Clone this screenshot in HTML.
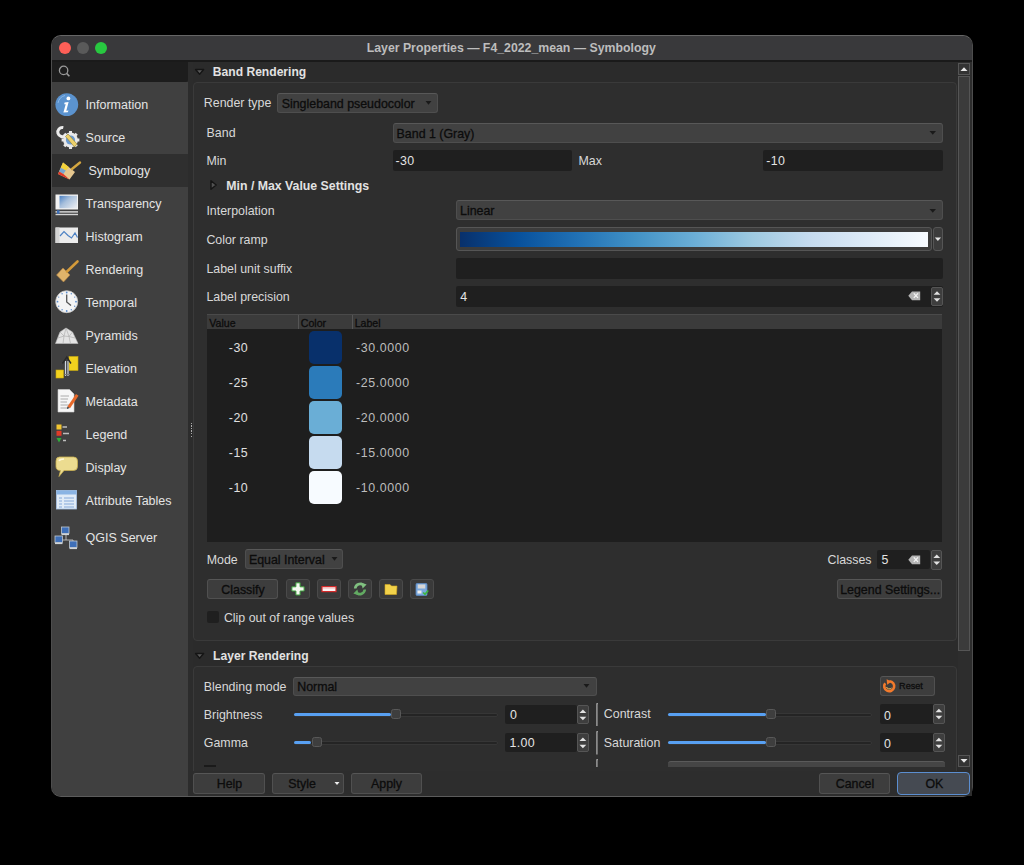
<!DOCTYPE html><html><head><meta charset="utf-8"><style>
html,body{margin:0;padding:0}
body{background:#000;width:1024px;height:865px;overflow:hidden;position:relative;font-family:"Liberation Sans",sans-serif}
.a{position:absolute;box-sizing:border-box}
.t{position:absolute;line-height:16px;white-space:nowrap}
svg{position:absolute;overflow:visible}
.combo{position:absolute;box-sizing:border-box;background:#414141;border:1px solid #4e4e4e;border-top-color:#585858;border-radius:3px}
.field{position:absolute;box-sizing:border-box;background:#1f1f1f;border-radius:2px}
.btn{position:absolute;box-sizing:border-box;background:#3d3d3d;border:1px solid #505050;border-top-color:#565656;border-radius:3px}
.tb{position:absolute;box-sizing:border-box;background:#3a3a3a;border:1px solid #4a4a4a;border-radius:3px}
</style></head><body>
<div class="a" style="left:51px;top:35px;width:922px;height:762px;background:#2d2d2d;border-radius:10px;border:1px solid #4d4d4d;border-bottom-color:#5c5c5c;border-top-color:#666666;overflow:hidden"></div>
<div class="a" style="left:52px;top:36px;width:920px;height:24px;background:#39393b;border-radius:9px 9px 0 0"></div>
<div class="a" style="left:52px;top:60px;width:920px;height:1.8px;background:#1a1a1a"></div>
<div class="a" style="left:58.5px;top:41.5px;width:12px;height:12px;border-radius:50%;background:#fe5f57"></div>
<div class="a" style="left:76.5px;top:41.5px;width:12px;height:12px;border-radius:50%;background:#5a5a5a"></div>
<div class="a" style="left:94.5px;top:41.5px;width:12px;height:12px;border-radius:50%;background:#28c840"></div>
<div class="t" style="left:366.70px;top:39.74px;font-size:12.3px;color:#bdbdbd;font-weight:700;">Layer Properties — F4_2022_mean — Symbology</div>
<div class="a" style="left:52px;top:61.8px;width:136px;height:20px;background:#1d1d1d;border-bottom-right-radius:2px"></div>
<svg style="left:58px;top:65px" width="14" height="14"><circle cx="5.6" cy="5.4" r="4.2" fill="none" stroke="#9a9a9a" stroke-width="1.3"/><line x1="8.6" y1="8.4" x2="11.4" y2="11.2" stroke="#9a9a9a" stroke-width="1.6"/></svg>
<div class="a" style="left:52px;top:82px;width:136px;height:714px;background:#404040;border-bottom-left-radius:9px"></div>
<div class="a" style="left:52px;top:154px;width:136px;height:33px;background:#2f2f2f"></div>
<div class="a" style="left:188px;top:61.8px;width:5px;height:734px;background:#2c2c2c"></div>
<div class="a" style="left:190.5px;top:422.5px;width:1.5px;height:1.5px;background:#aaa"></div>
<div class="a" style="left:190.5px;top:425.1px;width:1.5px;height:1.5px;background:#aaa"></div>
<div class="a" style="left:190.5px;top:427.7px;width:1.5px;height:1.5px;background:#aaa"></div>
<div class="a" style="left:190.5px;top:430.3px;width:1.5px;height:1.5px;background:#aaa"></div>
<div class="a" style="left:190.5px;top:432.9px;width:1.5px;height:1.5px;background:#aaa"></div>
<div class="a" style="left:190.5px;top:435.5px;width:1.5px;height:1.5px;background:#aaa"></div>
<div class="t" style="left:85.60px;top:97.37px;font-size:12.5px;color:#e4e4e4;">Information</div>
<div class="t" style="left:85.60px;top:130.27px;font-size:12.5px;color:#e4e4e4;">Source</div>
<div class="t" style="left:88.40px;top:162.97px;font-size:12.5px;color:#e4e4e4;">Symbology</div>
<div class="t" style="left:85.60px;top:195.77px;font-size:12.5px;color:#e4e4e4;">Transparency</div>
<div class="t" style="left:85.60px;top:228.87px;font-size:12.5px;color:#e4e4e4;">Histogram</div>
<div class="t" style="left:85.60px;top:262.07px;font-size:12.5px;color:#e4e4e4;">Rendering</div>
<div class="t" style="left:85.60px;top:294.67px;font-size:12.5px;color:#e4e4e4;">Temporal</div>
<div class="t" style="left:85.60px;top:327.87px;font-size:12.5px;color:#e4e4e4;">Pyramids</div>
<div class="t" style="left:85.60px;top:360.97px;font-size:12.5px;color:#e4e4e4;">Elevation</div>
<div class="t" style="left:85.60px;top:393.97px;font-size:12.5px;color:#e4e4e4;">Metadata</div>
<div class="t" style="left:85.60px;top:426.87px;font-size:12.5px;color:#e4e4e4;">Legend</div>
<div class="t" style="left:85.60px;top:460.07px;font-size:12.5px;color:#e4e4e4;">Display</div>
<div class="t" style="left:85.60px;top:493.07px;font-size:12.5px;color:#e4e4e4;">Attribute Tables</div>
<div class="t" style="left:85.60px;top:530.07px;font-size:12.5px;color:#e4e4e4;">QGIS Server</div>
<svg style="left:55px;top:93px" width="24" height="24" viewBox="0 0 24 24"><circle cx="11.8" cy="11.6" r="11.4" fill="#5b93cf"/><path d="M3 10 A9.5 9.5 0 0 1 10 2.5" stroke="#8cb8e8" stroke-width="1" fill="none"/><circle cx="13.4" cy="5.4" r="1.9" fill="#fff"/><path d="M9.6 9.4 L13.6 9 L11.3 17.8 L13.5 17.5 L12.8 19.2 L8.4 19.5 L10.7 11.2 L9.2 11.2 Z" fill="#fff"/></svg>
<svg style="left:55px;top:126px" width="25" height="24" viewBox="0 0 25 24"><circle cx="15.5" cy="14" r="7.4" fill="#e8e8e8"/><g fill="#e8e8e8"><rect x="14" y="5" width="3" height="3"/><rect x="14" y="20" width="3" height="3"/><rect x="6.6" y="12.5" width="3" height="3"/><rect x="21.4" y="12.5" width="3" height="3"/><rect x="8.8" y="7.3" width="3" height="3" transform="rotate(45 10.3 8.8)"/><rect x="19.2" y="17.7" width="3" height="3" transform="rotate(45 20.7 19.2)"/><rect x="19.2" y="7.3" width="3" height="3" transform="rotate(45 20.7 8.8)"/><rect x="8.8" y="17.7" width="3" height="3" transform="rotate(45 10.3 19.2)"/></g><circle cx="15.5" cy="14" r="4.6" fill="#6a9ad0"/><path d="M8.3 1.6 A4.6 4.6 0 1 0 10.6 9.4" fill="none" stroke="#ececec" stroke-width="3"/><path d="M10 9 L12 11" stroke="#ececec" stroke-width="2.4"/><path d="M10.5 10.5 L13 8 L22 18 L19.5 21 Z" fill="#ecd06a" stroke="#8a7a30" stroke-width="0.6"/></svg>
<svg style="left:57px;top:160px" width="25" height="21" viewBox="0 0 25 21"><path d="M1 14 L6 2.5 L18 12 L12.5 19.5 Z" fill="#e6c78f"/><path d="M6 2.5 L12 7.2 L8.8 10.6 L3.8 7.8 Z" fill="#f3d23a"/><path d="M3.8 7.8 L8.8 10.6 L6.4 14 L2.2 11.6 Z" fill="#78a6d0"/><path d="M2.2 11.6 L6.4 14 L12.5 19.5 L1 14 Z" fill="#e03525"/><path d="M15 9 L23 2.5" stroke="#d4a640" stroke-width="2.4" stroke-linecap="round"/></svg>
<svg style="left:55px;top:194px" width="24" height="22" viewBox="0 0 24 22"><defs><linearGradient id="gT" x1="0" y1="0" x2="1" y2="0.8"><stop offset="0" stop-color="#4a80c4"/><stop offset="0.45" stop-color="#a8c0dc"/><stop offset="1" stop-color="#e4e8ee"/></linearGradient></defs><rect x="0.5" y="0.5" width="22.5" height="15" fill="#f2f2f2"/><rect x="4.5" y="1.8" width="17.5" height="12.4" fill="url(#gT)"/><rect x="0.5" y="17.2" width="22.5" height="1.4" fill="#e0e0e0"/><rect x="0.5" y="19.8" width="22.5" height="1.4" fill="#d4d4d4"/><rect x="2" y="16.2" width="2.5" height="3.6" fill="#3d6fb8"/></svg>
<svg style="left:55px;top:227px" width="24" height="17" viewBox="0 0 24 17"><rect x="0.5" y="0.5" width="22.5" height="15.5" fill="#ececec"/><rect x="0.5" y="0.5" width="4" height="15.5" fill="#d4d4d4"/><path d="M5 9 L9 4.5 L13 8.5 L16.5 11 L20 6 L22.5 10.5" stroke="#4d82c4" stroke-width="1.2" fill="none"/></svg>
<svg style="left:55px;top:259px" width="25" height="24" viewBox="0 0 25 24"><path d="M1.5 16 L8 9 L15 16 L8.5 23 Z" fill="#dfb36a" stroke="#b08040" stroke-width="0.6"/><path d="M12 12.5 L22.5 2.5" stroke="#d39a3a" stroke-width="2.6" stroke-linecap="round"/></svg>
<svg style="left:55px;top:290px" width="24" height="24" viewBox="0 0 24 24"><circle cx="11.7" cy="11.7" r="11" fill="#f4f4f4" stroke="#c8c8c8" stroke-width="0.8"/><g fill="#5a8ccc"><circle cx="11.7" cy="2.5" r="0.9"/><circle cx="11.7" cy="21" r="0.9"/><circle cx="2.5" cy="11.7" r="0.9"/><circle cx="21" cy="11.7" r="0.9"/><circle cx="16.3" cy="3.7" r="0.7"/><circle cx="19.7" cy="7.1" r="0.7"/><circle cx="19.7" cy="16.3" r="0.7"/><circle cx="16.3" cy="19.7" r="0.7"/><circle cx="7.1" cy="19.7" r="0.7"/><circle cx="3.7" cy="16.3" r="0.7"/><circle cx="3.7" cy="7.1" r="0.7"/><circle cx="7.1" cy="3.7" r="0.7"/></g><path d="M11.7 4.5 V12 L16 15.5" stroke="#555" stroke-width="1.3" fill="none"/></svg>
<svg style="left:55px;top:327px" width="24" height="17" viewBox="0 0 24 17"><path d="M0.5 16.5 L5 5 L11 1 L17.5 5 L23 16.5 Z" fill="#e4e4e4" stroke="#bdbdbd" stroke-width="0.6"/><path d="M5 5 L9 9 L11 1 M17.5 5 L14 9.5 L11 1 M3 11 L9 9 L14 9.5 L20 11 M9 9 L8 16.5 M14 9.5 L15.5 16.5" stroke="#b0b0b0" stroke-width="0.7" fill="none"/></svg>
<svg style="left:55px;top:355px" width="24" height="25" viewBox="0 0 24 25"><rect x="14" y="1.5" width="9" height="14" fill="#f2d21e" stroke="#c8a810" stroke-width="0.6"/><rect x="1" y="15" width="7.5" height="8" fill="#f2d21e" stroke="#c8a810" stroke-width="0.6"/><path d="M10.5 21 V6 M13 21 V6" stroke="#cfd6de" stroke-width="1.2"/><path d="M7.5 8.5 L11.8 2 L16 8.5" stroke="#2a2a2a" stroke-width="1.4" fill="none"/><path d="M9.5 19.5 H15" stroke="#7a7a7a" stroke-width="1.2"/></svg>
<svg style="left:57px;top:389px" width="22" height="24" viewBox="0 0 22 24"><path d="M1 0.5 H12.5 L17 5 V23 H1 Z" fill="#f6f6f6" stroke="#cfcfcf" stroke-width="0.6"/><path d="M3.5 7 H12 M3.5 10 H11 M3.5 13 H10 M3.5 16 H12 M3.5 19 H11" stroke="#9a9a9a" stroke-width="0.8"/><path d="M10.5 17.5 L19 5 L21.5 6.8 L13 19.2 Z" fill="#e8692a"/><path d="M10.5 17.5 L10 20 L12.6 19" fill="#333"/></svg>
<svg style="left:55px;top:424px" width="20" height="20" viewBox="0 0 20 20"><rect x="1.5" y="0.5" width="5" height="5" fill="#f2c530"/><rect x="1.5" y="6.8" width="5" height="5" fill="#e03a28"/><path d="M1.5 14 L4 18.5 L6.5 14 Z" fill="#2fae3a"/><path d="M7.5 3 H12 M8 9.5 H14 M8 16.5 H11" stroke="#bdbdbd" stroke-width="1.4"/></svg>
<svg style="left:55px;top:456px" width="24" height="22" viewBox="0 0 24 22"><path d="M4.5 1 H18.5 Q22.5 1 22.5 5 V10.5 Q22.5 14.5 18.5 14.5 H9 L4 20.5 L5.5 14.5 Q1 14.5 1 10.5 V5 Q1 1 4.5 1 Z" fill="#ecdc90" stroke="#c9b050" stroke-width="0.8"/><path d="M4 5 Q5 3 9 3" stroke="#fff8d8" stroke-width="1.4" fill="none"/></svg>
<svg style="left:56px;top:490px" width="22" height="20" viewBox="0 0 22 20"><rect x="0.5" y="0.5" width="20" height="18.5" fill="#e0ebf7" stroke="#a8c4e6" stroke-width="0.8"/><rect x="0.5" y="0.5" width="20" height="4" fill="#8ab4e4"/><path d="M3 8 H6 M8 8 H18 M3 11 H6 M8 11 H18 M3 14 H6 M8 14 H18 M3 17 H6 M8 17 H18" stroke="#7aa2d6" stroke-width="0.9"/></svg>
<svg style="left:54px;top:526px" width="26" height="24" viewBox="0 0 26 24"><g stroke="#cfcfcf" stroke-width="0.8"><path d="M12 9 V14 M5 14 H19 M19 14 V16"/></g><g fill="#3e6fb8" stroke="#bfc8d0" stroke-width="0.8"><rect x="7.5" y="1" width="7.5" height="6.5"/><rect x="1" y="10" width="7.5" height="6.5"/><rect x="15.5" y="15" width="7.5" height="6.5"/></g><g fill="#cfd4d8"><rect x="7.5" y="7.5" width="7.5" height="1.6"/><rect x="1" y="16.5" width="7.5" height="1.6"/><rect x="15.5" y="21.5" width="7.5" height="1.6"/></g></svg>
<div class="a" style="left:193px;top:61.8px;width:765px;height:709.2px;background:#2b2b2b"></div>
<div class="a" style="left:958px;top:61.8px;width:14px;height:709.2px;background:#2d2d2d"></div>
<div class="a" style="left:958px;top:63px;width:12px;height:12px;background:#333;border:1px solid #555"></div>
<svg style="left:958px;top:63px" width="12" height="12"><path d="M2.5 8 L6 4.2 L9.5 8 Z" fill="#e8e8e8"/></svg>
<div class="a" style="left:958px;top:76px;width:12px;height:575px;background:#3b3b3b;border:1px solid #555"></div>
<div class="a" style="left:958px;top:755px;width:12px;height:12px;background:#333;border:1px solid #555"></div>
<svg style="left:958px;top:755px" width="12" height="12"><path d="M2.5 4 L6 7.8 L9.5 4 Z" fill="#e8e8e8"/></svg>
<div class="a" style="left:193px;top:82px;width:764px;height:559px;border:1px solid #3a3a3a;border-radius:4px;background:#2e2e2e"></div>
<svg style="left:194px;top:68px" width="12" height="8"><path d="M1.6 1.5 L9.6 1.5 L5.6 6.3 Z" fill="#595959" stroke="#151515" stroke-width="1.4" stroke-linejoin="round"/></svg>
<div class="t" style="left:212.80px;top:64.41px;font-size:12.1px;color:#e2e2e2;font-weight:700;">Band Rendering</div>
<div class="t" style="left:203.80px;top:95.30px;font-size:12.4px;color:#d8d8d8;">Render type</div>
<div class="combo" style="left:277px;top:92.5px;width:161px;height:20.5px"></div>
<div class="t" style="left:281.70px;top:95.70px;font-size:12.4px;color:#0c0c0c;-webkit-text-stroke:0.3px #0c0c0c">Singleband pseudocolor</div>
<svg style="left:425px;top:100px" width="8" height="6"><path d="M0.5 1 L6.5 1 L3.5 4.8 Z" fill="#1a1a1a"/></svg>
<div class="t" style="left:206.60px;top:125.10px;font-size:12.4px;color:#d8d8d8;">Band</div>
<div class="combo" style="left:393px;top:123px;width:550px;height:20px"></div>
<div class="t" style="left:396.60px;top:125.60px;font-size:12.4px;color:#0c0c0c;-webkit-text-stroke:0.3px #0c0c0c">Band 1 (Gray)</div>
<svg style="left:929px;top:130px" width="8" height="6"><path d="M0.5 1 L7 1 L3.75 4.8 Z" fill="#1a1a1a"/></svg>
<div class="t" style="left:206.40px;top:153.00px;font-size:12.4px;color:#d8d8d8;">Min</div>
<div class="field" style="left:392.5px;top:150px;width:179.5px;height:20.5px"></div>
<div class="t" style="left:395.40px;top:152.80px;font-size:12.4px;color:#e4e4e4;letter-spacing:0.4px;">-30</div>
<div class="t" style="left:578.50px;top:153.10px;font-size:12.4px;color:#d8d8d8;">Max</div>
<div class="field" style="left:763px;top:150px;width:180px;height:20.5px"></div>
<div class="t" style="left:766.20px;top:153.10px;font-size:12.4px;color:#e4e4e4;letter-spacing:0.4px;">-10</div>
<svg style="left:209px;top:179px" width="10" height="12"><path d="M2 1.8 L7.2 6 L2 10.2 Z" fill="#515151" stroke="#151515" stroke-width="1.4" stroke-linejoin="round"/></svg>
<div class="t" style="left:226.30px;top:178.14px;font-size:12.3px;color:#e2e2e2;font-weight:700;">Min / Max Value Settings</div>
<div class="t" style="left:206.40px;top:202.70px;font-size:12.4px;color:#d8d8d8;">Interpolation</div>
<div class="combo" style="left:456px;top:200px;width:487px;height:20px"></div>
<div class="t" style="left:460.00px;top:203.30px;font-size:12.4px;color:#0c0c0c;-webkit-text-stroke:0.3px #0c0c0c">Linear</div>
<svg style="left:929px;top:207.5px" width="8" height="6"><path d="M0.5 1 L7 1 L3.75 4.8 Z" fill="#1a1a1a"/></svg>
<div class="t" style="left:206.40px;top:232.00px;font-size:12.4px;color:#d8d8d8;">Color ramp</div>
<div class="a" style="left:456px;top:227px;width:476px;height:24px;background:#3c3c3c;border:1px solid #555;border-radius:3px"></div>
<div class="a" style="left:460px;top:231.5px;width:468px;height:15px;background:linear-gradient(to right,#08306b 0%,#08519c 12.5%,#2171b5 25%,#4292c6 37.5%,#6baed6 50%,#9ecae1 62.5%,#c6dbef 75%,#deebf7 87.5%,#f7fbff 100%)"></div>
<div class="a" style="left:933px;top:227px;width:9.5px;height:24px;background:#3c3c3c;border:1px solid #555;border-radius:3px"></div>
<svg style="left:933px;top:235px" width="10" height="8"><path d="M1.8 2.5 L8 2.5 L4.9 6 Z" fill="#e6e6e6"/></svg>
<div class="t" style="left:206.40px;top:261.00px;font-size:12.4px;color:#d8d8d8;">Label unit suffix</div>
<div class="field" style="left:456px;top:257.5px;width:487px;height:21.5px"></div>
<div class="t" style="left:206.40px;top:288.80px;font-size:12.4px;color:#d8d8d8;">Label precision</div>
<div class="field" style="left:456px;top:286px;width:487px;height:21px"></div>
<div class="t" style="left:460.20px;top:289.40px;font-size:12.4px;color:#e4e4e4;">4</div>
<svg style="left:908px;top:291px" width="13" height="10"><path d="M0.3 4.8 L4 0.5 L12.2 0.5 L12.2 9.2 L4 9.2 Z" fill="#b4b4b4"/><path d="M5.8 2.4 L10 6.9 M10 2.4 L5.8 6.9" stroke="#f4f4f4" stroke-width="1.3"/></svg>
<div class="a" style="left:930.5px;top:287px;width:12px;height:19px;background:#3e3e3e;border:1px solid #555;border-radius:2px"></div>
<svg style="left:930.5px;top:287px" width="12" height="19"><path d="M2.6 7.7 L6.0 4.2 L9.4 7.7 Z" fill="#e2e2e2"/><path d="M2.6 11.3 L6.0 14.8 L9.4 11.3 Z" fill="#e2e2e2"/></svg>
<div class="a" style="left:206.5px;top:314px;width:735.8px;height:227.6px;background:#1e1e1e"></div>
<div class="a" style="left:206.5px;top:314px;width:735.8px;height:15px;background:#3b3b3b;border-top:1px solid #4a4a4a"></div>
<div class="a" style="left:297.8px;top:315px;width:1px;height:14px;background:#555"></div>
<div class="a" style="left:351.6px;top:315px;width:1px;height:14px;background:#555"></div>
<div class="t" style="left:209.30px;top:315.23px;font-size:10.6px;color:#0c0c0c;-webkit-text-stroke:0.3px #0c0c0c">Value</div>
<div class="t" style="left:300.80px;top:315.23px;font-size:10.6px;color:#0c0c0c;-webkit-text-stroke:0.3px #0c0c0c">Color</div>
<div class="t" style="left:354.70px;top:315.23px;font-size:10.6px;color:#0c0c0c;-webkit-text-stroke:0.3px #0c0c0c">Label</div>
<div class="a" style="left:308.7px;top:330.7px;width:33px;height:33.3px;background:#08306b;border-radius:5px"></div>
<div class="t" style="left:228.80px;top:340.00px;font-size:12.4px;color:#e0e0e0;letter-spacing:0.5px;">-30</div>
<div class="t" style="left:356.00px;top:340.00px;font-size:12.4px;color:#bdbdbd;letter-spacing:0.6px;">-30.0000</div>
<div class="a" style="left:308.7px;top:365.7px;width:33px;height:33.3px;background:#2b7bba;border-radius:5px"></div>
<div class="t" style="left:228.80px;top:375.00px;font-size:12.4px;color:#e0e0e0;letter-spacing:0.5px;">-25</div>
<div class="t" style="left:356.00px;top:375.00px;font-size:12.4px;color:#bdbdbd;letter-spacing:0.6px;">-25.0000</div>
<div class="a" style="left:308.7px;top:400.7px;width:33px;height:33.3px;background:#6aaed6;border-radius:5px"></div>
<div class="t" style="left:228.80px;top:410.00px;font-size:12.4px;color:#e0e0e0;letter-spacing:0.5px;">-20</div>
<div class="t" style="left:356.00px;top:410.00px;font-size:12.4px;color:#bdbdbd;letter-spacing:0.6px;">-20.0000</div>
<div class="a" style="left:308.7px;top:435.7px;width:33px;height:33.3px;background:#c6dbef;border-radius:5px"></div>
<div class="t" style="left:228.80px;top:445.00px;font-size:12.4px;color:#e0e0e0;letter-spacing:0.5px;">-15</div>
<div class="t" style="left:356.00px;top:445.00px;font-size:12.4px;color:#bdbdbd;letter-spacing:0.6px;">-15.0000</div>
<div class="a" style="left:308.7px;top:470.7px;width:33px;height:33.3px;background:#f7fbff;border-radius:5px"></div>
<div class="t" style="left:228.80px;top:480.00px;font-size:12.4px;color:#e0e0e0;letter-spacing:0.5px;">-10</div>
<div class="t" style="left:356.00px;top:480.00px;font-size:12.4px;color:#bdbdbd;letter-spacing:0.6px;">-10.0000</div>
<div class="t" style="left:206.70px;top:551.90px;font-size:12.4px;color:#d8d8d8;">Mode</div>
<div class="combo" style="left:244.7px;top:549px;width:98.7px;height:19.8px"></div>
<div class="t" style="left:248.90px;top:552.40px;font-size:12.4px;color:#0c0c0c;-webkit-text-stroke:0.3px #0c0c0c">Equal Interval</div>
<svg style="left:331px;top:556px" width="8" height="6"><path d="M0.5 1 L6.5 1 L3.5 4.8 Z" fill="#1a1a1a"/></svg>
<div class="t" style="left:827.50px;top:552.10px;font-size:12.4px;color:#d8d8d8;">Classes</div>
<div class="field" style="left:876.7px;top:549.6px;width:53.5px;height:19.8px"></div>
<div class="t" style="left:881.50px;top:552.30px;font-size:12.4px;color:#e4e4e4;">5</div>
<svg style="left:907.5px;top:555px" width="13" height="10"><path d="M0.3 4.8 L4 0.5 L12.2 0.5 L12.2 9.2 L4 9.2 Z" fill="#b4b4b4"/><path d="M5.8 2.4 L10 6.9 M10 2.4 L5.8 6.9" stroke="#f4f4f4" stroke-width="1.3"/></svg>
<div class="a" style="left:930.7px;top:550px;width:11.5px;height:19.5px;background:#3e3e3e;border:1px solid #555;border-radius:2px"></div>
<svg style="left:930.7px;top:550px" width="11.5" height="19.5"><path d="M2.35 7.95 L5.75 4.45 L9.15 7.95 Z" fill="#e2e2e2"/><path d="M2.35 11.55 L5.75 15.05 L9.15 11.55 Z" fill="#e2e2e2"/></svg>
<div class="btn" style="left:207.2px;top:579px;width:71px;height:20px"></div>
<div class="t" style="left:221.30px;top:582.00px;font-size:12.4px;color:#0c0c0c;-webkit-text-stroke:0.3px #0c0c0c">Classify</div>
<div class="tb" style="left:286.0px;top:579px;width:24px;height:20px"></div>
<div class="tb" style="left:317.1px;top:579px;width:24px;height:20px"></div>
<div class="tb" style="left:348.2px;top:579px;width:24px;height:20px"></div>
<div class="tb" style="left:379.3px;top:579px;width:24px;height:20px"></div>
<div class="tb" style="left:410.4px;top:579px;width:24px;height:20px"></div>
<svg style="left:286px;top:579px" width="24" height="20"><path d="M9.9 3.8 h4.2 v4 h4 v4.2 h-4 v4 h-4.2 v-4 h-4 v-4.2 h4 z" fill="#f4f8f0" stroke="#3b9a3b" stroke-width="1"/></svg>
<svg style="left:317.1px;top:579px" width="24" height="20"><rect x="5" y="7.6" width="14" height="5" fill="#fdf2f2" stroke="#d42a2a" stroke-width="1.2"/><path d="M7 8.4 v1.6 M9 8.4 v1.6 M11 8.4 v1.6 M13 8.4 v1.6 M15 8.4 v1.6 M17 8.4 v1.6" stroke="#d88" stroke-width="0.6"/></svg>
<svg style="left:348.2px;top:579px" width="24" height="20"><path d="M7.2 9.5 A5 5 0 0 1 15.5 6.2" fill="none" stroke="#80c080" stroke-width="2.6"/><path d="M13.2 3.4 L18.6 5.6 L14.6 9.6 Z" fill="#80c080"/><path d="M16.8 10.5 A5 5 0 0 1 8.5 13.8" fill="none" stroke="#62aa62" stroke-width="2.6"/><path d="M10.8 16.6 L5.4 14.4 L9.4 10.4 Z" fill="#62aa62"/></svg>
<svg style="left:379.3px;top:579px" width="24" height="20"><path d="M6 5.5 h5 l1.5 1.5 h5.5 l-0.5 8.5 h-11.5 z" fill="#f2d24a" stroke="#d4a820" stroke-width="0.6"/></svg>
<svg style="left:410.4px;top:579px" width="24" height="20"><rect x="6" y="4.5" width="11" height="12" rx="1" fill="#7aa8dc" stroke="#5a88c0" stroke-width="0.8"/><rect x="7.8" y="5.5" width="7.4" height="4" fill="#d6d6d6"/><rect x="7.5" y="11.5" width="4" height="3" fill="#eee"/><path d="M13.2 13.5 l1.8 1.8 l3.2 -3.8" stroke="#3db83d" stroke-width="1.6" fill="none"/></svg>
<div class="btn" style="left:837.1px;top:579px;width:105px;height:20px"></div>
<div class="t" style="left:840.20px;top:582.20px;font-size:12.4px;color:#0c0c0c;-webkit-text-stroke:0.3px #0c0c0c">Legend Settings...</div>
<div class="a" style="left:206.7px;top:611.4px;width:12px;height:12px;background:#1f1f1f;border-radius:2px"></div>
<div class="t" style="left:223.90px;top:610.00px;font-size:12.4px;color:#d8d8d8;">Clip out of range values</div>
<svg style="left:194px;top:651.5px" width="12" height="8"><path d="M1.6 1.5 L9.6 1.5 L5.6 6.3 Z" fill="#595959" stroke="#151515" stroke-width="1.4" stroke-linejoin="round"/></svg>
<div class="t" style="left:213.10px;top:648.21px;font-size:12.1px;color:#e2e2e2;font-weight:700;">Layer Rendering</div>
<div class="a" style="left:193px;top:665.5px;width:764px;height:110px;border:1px solid #3a3a3a;border-radius:4px;background:#2e2e2e"></div>
<div class="t" style="left:203.80px;top:678.60px;font-size:12.4px;color:#d8d8d8;">Blending mode</div>
<div class="combo" style="left:293px;top:676.5px;width:304px;height:19.5px"></div>
<div class="t" style="left:297.20px;top:679.00px;font-size:12.4px;color:#0c0c0c;-webkit-text-stroke:0.3px #0c0c0c">Normal</div>
<svg style="left:583px;top:683px" width="8" height="6"><path d="M0.5 1 L6.5 1 L3.5 4.8 Z" fill="#1a1a1a"/></svg>
<div class="btn" style="left:880px;top:676px;width:55px;height:20px"></div>
<svg style="left:882px;top:678px" width="15" height="15"><path d="M3.2 5.2 A5 5 0 1 0 7.5 3.2" fill="none" stroke="#f27a2c" stroke-width="2.6"/><path d="M4.6 1.2 L9.6 3.4 L5.2 6.8 Z" fill="#f27a2c"/><path d="M4.5 9 A3 3 0 0 0 9.5 10" fill="none" stroke="#ffc35a" stroke-width="1"/></svg>
<div class="t" style="left:899.10px;top:678.45px;font-size:9.1px;color:#0c0c0c;-webkit-text-stroke:0.3px #0c0c0c">Reset</div>
<div class="t" style="left:203.80px;top:706.90px;font-size:12.4px;color:#d8d8d8;">Brightness</div>
<div class="a" style="left:293.7px;top:712.5px;width:203.90000000000003px;height:4px;background:#242424;border-radius:2px;border:1px solid #363636"></div>
<div class="a" style="left:293.7px;top:712.8px;width:97.5px;height:3.3px;background:#58a0f2;border-radius:2px"></div>
<div class="a" style="left:391.2px;top:709.2px;width:10.2px;height:10px;background:#3e3e3e;border:1px solid #585858;border-radius:2.5px"></div>
<div class="field" style="left:505.4px;top:704.7px;width:72px;height:19.7px"></div>
<div class="a" style="left:576.9px;top:704.7px;width:11.8px;height:19.7px;background:#3e3e3e;border:1px solid #555;border-radius:2px"></div>
<svg style="left:576.9px;top:704.7px" width="11.8" height="19.7"><path d="M2.5000000000000004 8.049999999999999 L5.9 4.55 L9.3 8.049999999999999 Z" fill="#e2e2e2"/><path d="M2.5000000000000004 11.65 L5.9 15.149999999999999 L9.3 11.65 Z" fill="#e2e2e2"/></svg>
<div class="t" style="left:510.00px;top:707.30px;font-size:12.4px;color:#e4e4e4;">0</div>
<div class="t" style="left:203.80px;top:735.10px;font-size:12.4px;color:#d8d8d8;">Gamma</div>
<div class="a" style="left:293.7px;top:740.5px;width:203.90000000000003px;height:4px;background:#242424;border-radius:2px;border:1px solid #363636"></div>
<div class="a" style="left:293.7px;top:740.8px;width:17.80000000000001px;height:3.3px;background:#58a0f2;border-radius:2px"></div>
<div class="a" style="left:311.5px;top:737.2px;width:10.2px;height:10px;background:#3e3e3e;border:1px solid #585858;border-radius:2.5px"></div>
<div class="field" style="left:505.4px;top:732.8px;width:72px;height:19.7px"></div>
<div class="a" style="left:576.9px;top:732.8px;width:11.8px;height:19.7px;background:#3e3e3e;border:1px solid #555;border-radius:2px"></div>
<svg style="left:576.9px;top:732.8px" width="11.8" height="19.7"><path d="M2.5000000000000004 8.049999999999999 L5.9 4.55 L9.3 8.049999999999999 Z" fill="#e2e2e2"/><path d="M2.5000000000000004 11.65 L5.9 15.149999999999999 L9.3 11.65 Z" fill="#e2e2e2"/></svg>
<div class="t" style="left:509.60px;top:735.40px;font-size:12.4px;color:#e4e4e4;letter-spacing:0.3px;">1.00</div>
<svg style="left:594px;top:702.8px" width="6" height="24"><path d="M2.9 0.2 V23" fill="none" stroke="#9a9a9a" stroke-width="1.5"/><path d="M2.9 0.6 H4" stroke="#9a9a9a" stroke-width="1.2"/></svg>
<svg style="left:594px;top:730.8px" width="6" height="24"><path d="M2.9 0.2 V23.5" fill="none" stroke="#9a9a9a" stroke-width="1.5"/><path d="M2.9 0.6 H4" stroke="#9a9a9a" stroke-width="1.2"/></svg>
<svg style="left:594px;top:758.6px" width="6" height="24"><path d="M2.9 0.2 V8" fill="none" stroke="#9a9a9a" stroke-width="1.5"/><path d="M2.9 0.6 H4" stroke="#9a9a9a" stroke-width="1.2"/></svg>
<div class="t" style="left:603.80px;top:706.10px;font-size:12.4px;color:#d8d8d8;">Contrast</div>
<div class="a" style="left:668.4px;top:712.5px;width:203.60000000000002px;height:4px;background:#242424;border-radius:2px;border:1px solid #363636"></div>
<div class="a" style="left:668.4px;top:712.8px;width:97.60000000000002px;height:3.3px;background:#58a0f2;border-radius:2px"></div>
<div class="a" style="left:766px;top:709.2px;width:10.2px;height:10px;background:#3e3e3e;border:1px solid #585858;border-radius:2.5px"></div>
<div class="field" style="left:879.6px;top:704.4px;width:54px;height:19.9px"></div>
<div class="a" style="left:933.2px;top:704.4px;width:11.8px;height:19.9px;background:#3e3e3e;border:1px solid #555;border-radius:2px"></div>
<svg style="left:933.2px;top:704.4px" width="11.8" height="19.9"><path d="M2.5000000000000004 8.149999999999999 L5.9 4.6499999999999995 L9.3 8.149999999999999 Z" fill="#e2e2e2"/><path d="M2.5000000000000004 11.75 L5.9 15.25 L9.3 11.75 Z" fill="#e2e2e2"/></svg>
<div class="t" style="left:884.00px;top:707.60px;font-size:12.4px;color:#e4e4e4;">0</div>
<div class="t" style="left:603.80px;top:734.60px;font-size:12.4px;color:#d8d8d8;">Saturation</div>
<div class="a" style="left:668.4px;top:740.5px;width:203.60000000000002px;height:4px;background:#242424;border-radius:2px;border:1px solid #363636"></div>
<div class="a" style="left:668.4px;top:740.8px;width:97.60000000000002px;height:3.3px;background:#58a0f2;border-radius:2px"></div>
<div class="a" style="left:766px;top:737.2px;width:10.2px;height:10px;background:#3e3e3e;border:1px solid #585858;border-radius:2.5px"></div>
<div class="field" style="left:879.6px;top:732.6px;width:54px;height:19.9px"></div>
<div class="a" style="left:933.2px;top:732.6px;width:11.8px;height:19.9px;background:#3e3e3e;border:1px solid #555;border-radius:2px"></div>
<svg style="left:933.2px;top:732.6px" width="11.8" height="19.9"><path d="M2.5000000000000004 8.149999999999999 L5.9 4.6499999999999995 L9.3 8.149999999999999 Z" fill="#e2e2e2"/><path d="M2.5000000000000004 11.75 L5.9 15.25 L9.3 11.75 Z" fill="#e2e2e2"/></svg>
<div class="t" style="left:884.00px;top:735.90px;font-size:12.4px;color:#e4e4e4;">0</div>
<div class="a" style="left:668px;top:760.5px;width:277px;height:6.2px;background:#454545;border-top:1px solid #5a5a5a;border-radius:3px 3px 0 0"></div>
<div class="a" style="left:203.5px;top:764.6px;width:12px;height:2px;background:#1a1a1a"></div>
<div class="a" style="left:193px;top:771px;width:779px;height:25px;background:#2d2d2d"></div>
<div class="btn" style="left:193.3px;top:773.2px;width:72px;height:20.5px"></div>
<div class="t" style="left:216.70px;top:776.20px;font-size:12.4px;color:#0c0c0c;-webkit-text-stroke:0.3px #0c0c0c">Help</div>
<div class="btn" style="left:272.2px;top:773.2px;width:71.5px;height:20.5px"></div>
<div class="t" style="left:288.30px;top:776.20px;font-size:12.4px;color:#0c0c0c;-webkit-text-stroke:0.3px #0c0c0c">Style</div>
<div class="btn" style="left:351px;top:773.2px;width:71px;height:20.5px"></div>
<div class="t" style="left:371.00px;top:776.20px;font-size:12.4px;color:#0c0c0c;-webkit-text-stroke:0.3px #0c0c0c">Apply</div>
<div class="btn" style="left:819.1px;top:773.2px;width:71px;height:20.5px"></div>
<div class="t" style="left:835.70px;top:776.20px;font-size:12.4px;color:#0c0c0c;-webkit-text-stroke:0.3px #0c0c0c">Cancel</div>
<svg style="left:334px;top:781px" width="8" height="6"><path d="M0.5 1 L5.5 1 L3 4 Z" fill="#eee"/></svg>
<div class="a" style="left:896.7px;top:772.1px;width:73.5px;height:22.8px;background:#454a52;border:1.5px solid #5b8ed0;border-radius:4px"></div>
<div class="t" style="left:925.40px;top:776.20px;font-size:12.4px;color:#0c0c0c;-webkit-text-stroke:0.3px #0c0c0c">OK</div>
</body></html>
